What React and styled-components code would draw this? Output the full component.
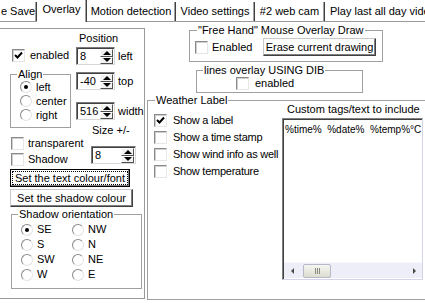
import React from 'react';
import styled, { createGlobalStyle } from 'styled-components';

const GlobalStyle = createGlobalStyle`
  html, body { margin: 0; padding: 0; background: #fff; }
  body {
    font-family: "Liberation Sans", Arial, sans-serif;
    font-size: 11px;
    line-height: 13px;
    color: #000;
  }
  * { box-sizing: border-box; }
`;

const Window = styled.div`
  width: 425px;
  height: 305px;
  overflow: hidden;
  background: #fff;
`;

const TabStrip = styled.div`
  display: flex;
  align-items: flex-end;
  height: 22px;
  border-bottom: 1px solid #9a9a9a;
`;

const Tab = styled.div`
  flex: none;
  width: ${p => p.$w}px;
  height: ${p => (p.$active ? 22 : 19)}px;
  margin-bottom: ${p => (p.$active ? -1 : 0)}px;
  padding: 0 0 ${p => (p.$active ? 3 : 1)}px ${p => p.$pl || 0}px;
  display: flex;
  align-items: center;
  justify-content: ${p => (p.$pl ? 'flex-start' : 'center')};
  background: #fff;
  border-right: 1px solid #404040;
  box-shadow: inset -1px 0 #a0a0a0;
  position: relative;
  z-index: ${p => (p.$active ? 1 : 0)};
  white-space: nowrap;
`;

const Body = styled.div`
  display: flex;
  align-items: flex-start;
  margin-top: 6px;
`;

const LeftPanel = styled.div`
  flex: none;
  width: 145px;
  height: 271px;
  border: 1px solid #9a9a9a;
  border-left: none;
  padding-left: 10px;
`;

const TopArea = styled.div`
  display: flex;
  height: 137px;
`;

const Column = styled.div`
  display: flex;
  flex-direction: column;
  align-items: flex-start;
  width: ${p => p.$w}px;
`;

const Label = styled.div`
  white-space: nowrap;
  margin: ${p => p.$m || '0'};
  line-height: 13px;
`;

const Group = styled.div`
  position: relative;
  border: 1px solid #a0a0a0;
  width: ${p => p.$w}px;
  height: ${p => p.$h}px;
  margin: ${p => p.$m || '0'};
  padding: ${p => p.$pad || '0'};
`;

const Legend = styled.span`
  position: absolute;
  top: -7px;
  left: ${p => p.$left || 6}px;
  padding: 0 1px;
  background: #fff;
  line-height: 13px;
  white-space: nowrap;
`;

const Row = styled.div`
  display: flex;
  align-items: center;
  gap: ${p => p.$gap ?? 5}px;
  height: ${p => p.$h || 13}px;
  margin: ${p => p.$m || '0'};
  letter-spacing: ${p => p.$ls || 0}px;
  white-space: nowrap;
`;

const Box = styled.span`
  flex: none;
  width: 13px;
  height: 13px;
  display: flex;
  align-items: center;
  justify-content: center;
  background: #fff;
  border: 1px solid;
  border-color: #8a8a8a #e6e6e6 #e6e6e6 #8a8a8a;
  box-shadow: inset 1px 1px #cfcfcf;
`;

const Circle = styled.span`
  flex: none;
  width: 12px;
  height: 12px;
  border-radius: 50%;
  display: flex;
  align-items: center;
  justify-content: center;
  background: #fff;
  border: 1px solid;
  border-color: #8a8a8a #e4e4e4 #e4e4e4 #8a8a8a;
  &::after {
    content: '';
    display: ${p => (p.$on ? 'block' : 'none')};
    width: 4px;
    height: 4px;
    border-radius: 50%;
    background: #000;
  }
`;

const RadioGrid = styled.div`
  display: grid;
  grid-template-columns: 51px 51px;
  grid-template-rows: repeat(4, 15px);
  grid-auto-flow: column;
`;

const SpinRow = styled.div`
  display: flex;
  align-items: center;
  gap: 3px;
  margin: ${p => p.$m || '0'};
`;

const SpinBox = styled.div`
  display: flex;
  width: ${p => p.$w}px;
  height: 18px;
  background: #fff;
  border: 1px solid;
  border-color: #7a7a7a #d8d8d8 #d8d8d8 #7a7a7a;
  box-shadow: inset 1px 1px #404040;
`;

const SpinText = styled.span`
  flex: 1;
  padding: 2px 0 0 3px;
  line-height: 13px;
`;

const SpinButtons = styled.div`
  display: flex;
  flex-direction: column;
  width: 13px;
  margin: 1px 1px 0 0;
`;

const SpinBtn = styled.div`
  flex: 1;
  display: flex;
  align-items: center;
  justify-content: center;
  background: #f2f2f2;
  border: 1px solid;
  border-color: #fff #505050 #505050 #fff;
  &::after {
    content: '';
    border-left: 4px solid transparent;
    border-right: 4px solid transparent;
    ${p => (p.$down ? 'border-top: 4px solid #000;' : 'border-bottom: 4px solid #000;')}
  }
`;

const Button = styled.div`
  display: flex;
  align-items: center;
  justify-content: center;
  width: ${p => p.$w}px;
  height: 18px;
  margin: ${p => p.$m || '0'};
  background: #fff;
  white-space: nowrap;
  border: 1px solid;
  border-color: ${p => (p.$default ? '#000' : '#c8c8c8 #404040 #404040 #c8c8c8')};
  box-shadow: inset -1px -1px #808080;
`;

const Focus = styled.span`
  outline: 1px dotted #000;
  outline-offset: 0;
  padding: 0 2px;
  line-height: 12px;
`;

const RightArea = styled.div`
  flex: 1;
  display: flex;
  flex-direction: column;
  align-items: flex-start;
`;

const WeatherBody = styled.div`
  display: flex;
`;

const CheckList = styled.div`
  width: 128px;
  margin-left: 6px;
  padding-top: 11px;
`;

const CustomCol = styled.div`
  width: 141px;
  padding-top: 1px;
`;

const TextArea = styled.div`
  display: flex;
  flex-direction: column;
  height: 162px;
  margin-top: 2px;
  background: #fff;
  border: 1px solid;
  border-color: #808080 #d4d4ec #d4d4ec #808080;
  box-shadow: inset 1px 1px #404040;
`;

const AreaText = styled.div`
  flex: 1;
  padding: 4px 0 0 2px;
  font-size: 10px;
  white-space: pre;
  overflow: hidden;
`;

const HScroll = styled.div`
  display: flex;
  align-items: center;
  height: 16px;
  margin: 0 0 1px 1px;
  background: #eeeef8;
  border-top: 1px solid #f8f8ff;
`;

const ScrollArrow = styled.div`
  display: flex;
  align-items: center;
  justify-content: center;
  width: 16px;
  height: 15px;
  &::after {
    content: '';
    border-top: 3px solid transparent;
    border-bottom: 3px solid transparent;
    ${p => (p.$right ? 'border-left: 3px solid #4a4a4a;' : 'border-right: 3px solid #4a4a4a;')}
  }
`;

const Thumb = styled.div`
  display: flex;
  align-items: center;
  justify-content: center;
  gap: 1px;
  width: 28px;
  height: 14px;
  margin: 0 auto 0 3px;
  border: 1px solid #b4b8c8;
  border-radius: 2px;
  background: linear-gradient(#f6f6f2, #dcdcd0);
  span {
    width: 1px;
    height: 6px;
    background: #8a8a7a;
  }
`;

const Checkbox = ({ checked }) => (
  <Box>
    {checked && (
      <svg width="9" height="9" viewBox="0 0 9 9">
        <polyline points="1,4 3.5,6.5 8,1.5" fill="none" stroke="#000" strokeWidth="2" />
      </svg>
    )}
  </Box>
);

const Check = ({ label, checked, gap, m, h, ls }) => (
  <Row $gap={gap} $m={m} $h={h} $ls={ls}>
    <Checkbox checked={checked} />
    {label}
  </Row>
);

const Radio = ({ label, on, h = 14 }) => (
  <Row $gap={4} $h={h}>
    <Circle $on={on} />
    {label}
  </Row>
);

const Spin = ({ value, w = 39, label, m }) => (
  <SpinRow $m={m}>
    <SpinBox $w={w}>
      <SpinText>{value}</SpinText>
      <SpinButtons>
        <SpinBtn />
        <SpinBtn $down />
      </SpinButtons>
    </SpinBox>
    {label && <span>{label}</span>}
  </SpinRow>
);

const tabs = [
  { label: 'e Save', w: 37 },
  { label: 'Overlay', w: 50, active: true },
  { label: 'Motion detection', w: 89 },
  { label: 'Video settings', w: 79 },
  { label: '#2 web cam', w: 70 },
  { label: 'Play last all day video', w: 116, pl: 5 },
];

const shadows = [
  ['SE', true], ['S'], ['SW'], ['W'],
  ['NW'], ['N'], ['NE'], ['E'],
];

const weatherChecks = [
  ['Show a label', true],
  ['Show a time stamp'],
  ['Show wind info as well'],
  ['Show temperature'],
];

const App = () => (
  <Window>
    <GlobalStyle />
    <TabStrip>
      {tabs.map(t => (
        <Tab key={t.label} $w={t.w} $active={t.active} $pl={t.pl}>{t.label}</Tab>
      ))}
    </TabStrip>
    <Body>
      <LeftPanel>
        <TopArea>
          <Column $w={66}>
            <Check label="enabled" checked m="20px 0 0 2px" />
            <Group $w={61} $h={54} $m="12px 0 0 0" $pad="5px 0 0 9px">
              <Legend>Align</Legend>
              <Radio label="left" on />
              <Radio label="center" />
              <Radio label="right" />
            </Group>
            <Check label="transparent" gap={4} m="9px 0 0 1px" />
            <Check label="Shadow" gap={4} m="3px 0 0 1px" />
          </Column>
          <Column $w={68}>
            <Label $m="3px 0 0 3px">Position</Label>
            <Spin value="8" label="left" m="2px 0 0 0" />
            <Spin value="-40" label="top" m="7px 0 0 0" />
            <Spin value="516" label="width" m="12px 0 0 0" />
            <Label $m="4px 0 0 16px">Size +/-</Label>
            <Spin value="8" w={45} m="9px 0 0 15px" />
          </Column>
        </TopArea>
        <Button $default $w={120} $m="3px 0 0 0">
          <Focus>Set the text colour/font</Focus>
        </Button>
        <Button $w={123} $m="2px 0 0 0">Set the shadow colour</Button>
        <Group $w={131} $h={75} $m="7px 0 0 1px" $pad="7px 0 0 9px">
          <Legend>Shadow orientation</Legend>
          <RadioGrid>
            {shadows.map(([l, on]) => (
              <Radio key={l} label={l} on={on} h={15} />
            ))}
          </RadioGrid>
        </Group>
      </LeftPanel>
      <RightArea>
        <Group $w={194} $h={32} $m="2px 0 0 44px" $pad="7px 6px 0 5px">
          <Legend $left={7}>"Free Hand" Mouse Overlay Draw</Legend>
          <Row $h={18} $gap={4}>
            <Checkbox />
            Enabled
            <Button $w={113} style={{ marginLeft: 'auto' }}>Erase current drawing</Button>
          </Row>
        </Group>
        <Group $w={167} $h={23} $m="8px 0 0 51px" $pad="6px 0 0 39px">
          <Legend>lines overlay USING DIB</Legend>
          <Check label="enabled" gap={6} />
        </Group>
        <Group $w={290} $h={200} $m="7px 0 0 2px">
          <Legend $left={7}>Weather Label</Legend>
          <WeatherBody>
            <CheckList>
              {weatherChecks.map(([l, c]) => (
                <Check key={l} label={l} checked={c} gap={6} h={17} ls={-0.25} />
              ))}
            </CheckList>
            <CustomCol>
              <Label $m="1px 0 0 5px">Custom tags/text to include</Label>
              <TextArea>
                <AreaText>%time%  %date%  %temp%°C</AreaText>
                <HScroll>
                  <ScrollArrow />
                  <Thumb><span /><span /><span /></Thumb>
                  <ScrollArrow $right />
                </HScroll>
              </TextArea>
            </CustomCol>
          </WeatherBody>
        </Group>
      </RightArea>
    </Body>
  </Window>
);

export default App;
